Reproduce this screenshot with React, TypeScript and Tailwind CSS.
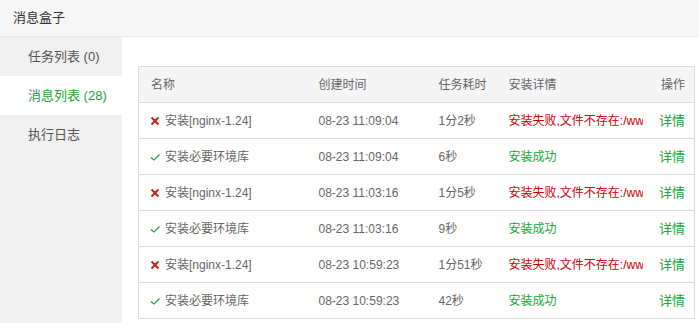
const rows = [
  { ok: false, name: "安装[nginx-1.24]", time: "08-23 11:09:04", cost: "1分2秒" },
  { ok: true, name: "安装必要环境库", time: "08-23 11:09:04", cost: "6秒" },
  { ok: false, name: "安装[nginx-1.24]", time: "08-23 11:03:16", cost: "1分5秒" },
  { ok: true, name: "安装必要环境库", time: "08-23 11:03:16", cost: "9秒" },
  { ok: false, name: "安装[nginx-1.24]", time: "08-23 10:59:23", cost: "1分51秒" },
  { ok: true, name: "安装必要环境库", time: "08-23 10:59:23", cost: "42秒" },
];

function Cross() {
  return (
    <svg width="10" height="10" viewBox="0 0 10 10" className="shrink-0">
      <path d="M1.5 1.5 L8.5 8.5 M8.5 1.5 L1.5 8.5" stroke="#c9211e" strokeWidth="2" fill="none" />
    </svg>
  );
}

function Check() {
  return (
    <svg width="10" height="10" viewBox="0 0 10 10" className="shrink-0">
      <path d="M1 5.5 L4 8 L9.5 2.5" stroke="#20a53a" strokeWidth="1.2" fill="none" />
    </svg>
  );
}

const sideItems = ["任务列表 (0)", "消息列表 (28)", "执行日志"];

export default function App() {
  return (
    <div className="w-[699px] h-[323px] overflow-hidden bg-white text-[#555] font-['Liberation_Sans','Noto_Sans_CJK_SC',sans-serif]">
      <div className="h-[37px] bg-[#f6f6f6] border-b border-[#e8e8e8] flex items-center pl-[13px] text-[13px] text-[#333]">
        消息盒子
      </div>
      <div className="flex h-[286px]">
        <div className="w-[122px] shrink-0 bg-[#f0f0f0]">
          {sideItems.map((s, i) => (
            <div
              key={s}
              className={
                i === 1
                  ? "h-[39px] flex items-center pl-[28px] text-[13px] bg-white text-[#20a53a]"
                  : "h-[39px] flex items-center pl-[28px] text-[13px] text-[#555]"
              }
            >
              {s}
            </div>
          ))}
        </div>
        <div className="flex-1 pl-[16px] pr-[4px] pt-[29px]">
          <table className="w-[557px] table-fixed border-collapse border border-[#ddd] text-[12px]">
            <colgroup>
              <col className="w-[168px]" />
              <col className="w-[120px]" />
              <col className="w-[70px]" />
              <col className="w-[146px]" />
              <col />
            </colgroup>
            <thead>
              <tr className="h-[36px] bg-[#f5f5f5] text-[#666]">
                <th className="font-normal text-left pl-[12px]">名称</th>
                <th className="font-normal text-left pl-[12px]">创建时间</th>
                <th className="font-normal text-left pl-[12px]">任务耗时</th>
                <th className="font-normal text-left pl-[12px]">安装详情</th>
                <th className="font-normal text-right pr-[9px]">操作</th>
              </tr>
            </thead>
            <tbody>
              {rows.map((r, i) => (
                <tr key={i} className="h-[36px] border-t border-[#ddd] text-[#666]">
                  <td className="pl-[11px]">
                    <div className="flex items-center gap-[5px]">
                      {r.ok ? <Check /> : <Cross />}
                      <span>{r.name}</span>
                    </div>
                  </td>
                  <td className="pl-[12px] whitespace-nowrap">{r.time}</td>
                  <td className="pl-[12px] whitespace-nowrap">{r.cost}</td>
                  <td className="pl-[12px]">
                    <div className="w-[134px] overflow-hidden whitespace-nowrap">
                      {r.ok ? (
                        <span className="text-[#20a53a]">安装成功</span>
                      ) : (
                        <span className="text-[#cc0000]">安装失败,文件不存在:/ww</span>
                      )}
                    </div>
                  </td>
                  <td className="text-right pr-[9px] text-[#20a53a] text-[13px]">详情</td>
                </tr>
              ))}
            </tbody>
          </table>
        </div>
      </div>
    </div>
  );
}
